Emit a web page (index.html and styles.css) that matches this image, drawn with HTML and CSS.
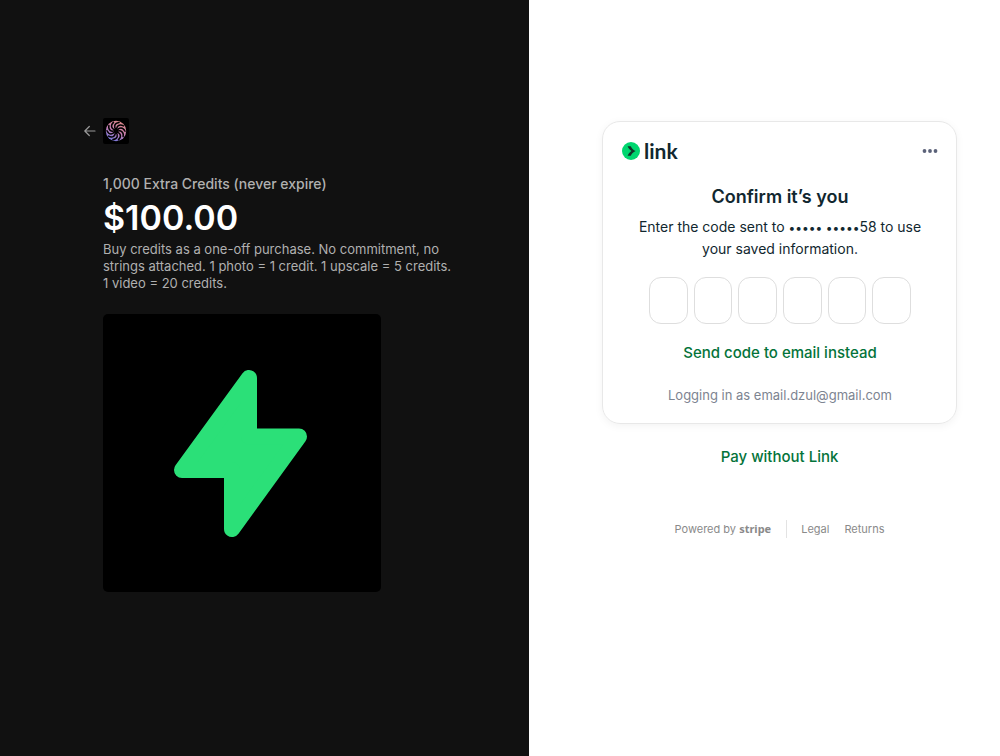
FILE: index.html
```html
<!DOCTYPE html>
<html lang="en">
<head>
<meta charset="utf-8">
<meta name="viewport" content="width=device-width, initial-scale=1">
<title>Checkout</title>
<link rel="stylesheet" href="styles.css">
</head>
<body>
<div class="checkout">
  <section class="summary">
    <header class="merchant">
      <a class="back" href="#" aria-label="Back">
        <svg width="12" height="12" viewBox="0 0 12 12" fill="none" stroke="currentColor" stroke-width="1.2" stroke-linecap="round" stroke-linejoin="round"><path d="M11 6H.8M5.3 1.500.8 6l4.500 4.500"/></svg>
      </a>
      <svg class="merchant-logo" width="26" height="26" viewBox="-13 -13 26 26">
        <defs>
          <linearGradient id="swirl" gradientUnits="userSpaceOnUse" x1="5" y1="-10" x2="-5" y2="10">
            <stop offset="0" stop-color="#e08a88"/>
            <stop offset=".5" stop-color="#c47cae"/>
            <stop offset="1" stop-color="#6f78e0"/>
          </linearGradient>
          <path id="groove" d="M1 0C3-3.800 7-4 9 .3"/>
        </defs>
        <circle r="10.200" fill="url(#swirl)"/>
        <g fill="none" stroke="#000" stroke-width="1.500" stroke-linecap="round">
          <use href="#groove"/>
          <use href="#groove" transform="rotate(36)"/>
          <use href="#groove" transform="rotate(72)"/>
          <use href="#groove" transform="rotate(108)"/>
          <use href="#groove" transform="rotate(144)"/>
          <use href="#groove" transform="rotate(180)"/>
          <use href="#groove" transform="rotate(216)"/>
          <use href="#groove" transform="rotate(252)"/>
          <use href="#groove" transform="rotate(288)"/>
          <use href="#groove" transform="rotate(324)"/>
        </g>
      </svg>
    </header>
    <div class="product">
      <h1 class="product-name">1,000 Extra Credits (never expire)</h1>
      <p class="price">$100.00</p>
      <p class="description">Buy credits as a one-off purchase. No commitment, no strings attached. 1 photo = 1 credit. 1 upscale = 5 credits. 1 video = 20 credits.</p>
      <svg class="product-image" viewBox="0 0 278 278" role="img" aria-label="Green lightning bolt">
        <path d="M146 64V122.500H196L129 215V156H79Z" fill="#2be078" stroke="#2be078" stroke-width="16" stroke-linejoin="round"/>
      </svg>
    </div>
  </section>

  <main class="payment">
    <form class="card">
      <div class="card-top">
        <div class="link-logo">
          <svg width="18" height="18" viewBox="0 0 18 18"><circle cx="9" cy="9" r="9" fill="#00d66f"/><path d="M5.600 4.200h3.200C9.700 6.300 11.300 8 13.600 9c-2.300 1-3.900 2.700-4.800 4.800H5.600C6.500 11.800 7.700 10.200 9.400 9 7.700 7.800 6.500 6.200 5.600 4.200Z" fill="#11352a"/></svg>
          <span>link</span>
        </div>
        <button class="more" type="button" aria-label="More options">
          <svg width="16" height="4" viewBox="0 0 16 4" fill="currentColor"><circle cx="2.500" cy="2" r="1.900"/><circle cx="8" cy="2" r="1.900"/><circle cx="13.500" cy="2" r="1.900"/></svg>
        </button>
      </div>
      <h2 class="card-title">Confirm it’s you</h2>
      <p class="card-text">Enter the code sent to <span class="mask">••••• •••••</span>58 to use your saved information.</p>
      <div class="code" role="group" aria-label="Verification code">
        <input type="text" inputmode="numeric" maxlength="1" aria-label="Digit 1">
        <input type="text" inputmode="numeric" maxlength="1" aria-label="Digit 2">
        <input type="text" inputmode="numeric" maxlength="1" aria-label="Digit 3">
        <input type="text" inputmode="numeric" maxlength="1" aria-label="Digit 4">
        <input type="text" inputmode="numeric" maxlength="1" aria-label="Digit 5">
        <input type="text" inputmode="numeric" maxlength="1" aria-label="Digit 6">
      </div>
      <button class="text-button" type="button">Send code to email instead</button>
      <p class="account">Logging in as email.dzul@gmail.com</p>
    </form>
    <button class="text-button" type="button">Pay without Link</button>
    <footer class="footer">
      <a class="powered" href="#">Powered by <span class="stripe">stripe</span></a>
      <nav class="legal">
        <a href="#">Legal</a>
        <a href="#">Returns</a>
      </nav>
    </footer>
  </main>
</div>
</body>
</html>
```

FILE: styles.css
```css
* {
  box-sizing: border-box;
}

body {
  margin: 0;
  font-family: Inter, "Liberation Sans", sans-serif;
  background: #fff;
  color: #11272f;
}

h1, h2, p {
  margin: 0;
}

a {
  color: inherit;
  text-decoration: none;
}

button {
  padding: 0;
  border: 0;
  background: none;
  font: inherit;
  cursor: pointer;
}

svg {
  display: block;
}

.checkout {
  display: grid;
  grid-template-columns: 529fr 471fr;
  min-height: 100vh;
}

/* Order summary */

.summary {
  padding: 118px 72px 48px 84px;
  background: #111;
  color: #b0b0b0;
}

.merchant {
  display: flex;
  align-items: center;
  gap: 7px;
}

.back {
  color: #9a9a9a;
}

.merchant-logo {
  background: #000;
  border-radius: 2px;
}

.product {
  padding: 29px 0 0 19px;
}

.product-name {
  font-size: 14px;
  font-weight: 500;
  line-height: 22px;
}

.price {
  margin-top: 1px;
  color: #fff;
  font-size: 34px;
  font-weight: 600;
  line-height: 44px;
}

.description {
  margin-top: 1px;
  font-size: 13px;
  font-weight: 400;
  line-height: 17px;
}

.product-image {
  width: 100%;
  max-width: 278px;
  margin-top: 22px;
  border-radius: 5px;
  background: #000;
}

/* Payment */

.payment {
  display: flex;
  flex-direction: column;
  align-items: center;
  padding: 121px 43px 48px 73px;
}

.card {
  display: flex;
  flex-direction: column;
  align-items: center;
  width: 100%;
  padding: 19px 18px 18px 19px;
  border: 1px solid #e8e8e8;
  border-radius: 18px;
  box-shadow: 0 2px 8px rgba(0, 0, 0, 0.05);
  text-align: center;
}

.card-top {
  display: flex;
  align-items: center;
  justify-content: space-between;
  width: 100%;
  height: 20px;
}

.link-logo {
  display: flex;
  align-items: center;
  gap: 4px;
  font-family: Lato, sans-serif;
  font-size: 21px;
  font-weight: 700;
  line-height: 20px;
}

.more {
  color: #5b6279;
}

.card-title {
  margin-top: 23px;
  font-size: 18px;
  font-weight: 600;
  line-height: 26px;
}

.card-text {
  max-width: 300px;
  margin-top: 6px;
  font-size: 14px;
  line-height: 22px;
}

.mask {
  font-size: 12px;
  line-height: 12px;
}

.code {
  display: flex;
  gap: 6px;
  width: 262px;
  max-width: 100%;
  margin: 17px 0;
}

.code input {
  flex: 1;
  min-width: 0;
  height: 47px;
  padding: 0;
  border: 1px solid #dedede;
  border-radius: 12px;
  background: #fff;
  font: inherit;
  font-size: 18px;
  text-align: center;
}

.text-button {
  color: #04733a;
  font-size: 15px;
  font-weight: 500;
  line-height: 24px;
}

.account {
  margin-top: 20px;
  color: #7d8491;
  font-size: 13px;
  line-height: 20px;
}

.card + .text-button {
  margin-top: 21px;
}

.footer {
  display: flex;
  align-items: center;
  margin-top: 51px;
  color: #8a8a8a;
  font-size: 11px;
  line-height: 18px;
}

.powered {
  padding-right: 15px;
  border-right: 1px solid #e3e3e3;
}

.stripe {
  font-family: "Noto Sans", sans-serif;
  font-weight: 700;
}

.legal {
  display: flex;
  gap: 15px;
  padding-left: 14px;
}
```
